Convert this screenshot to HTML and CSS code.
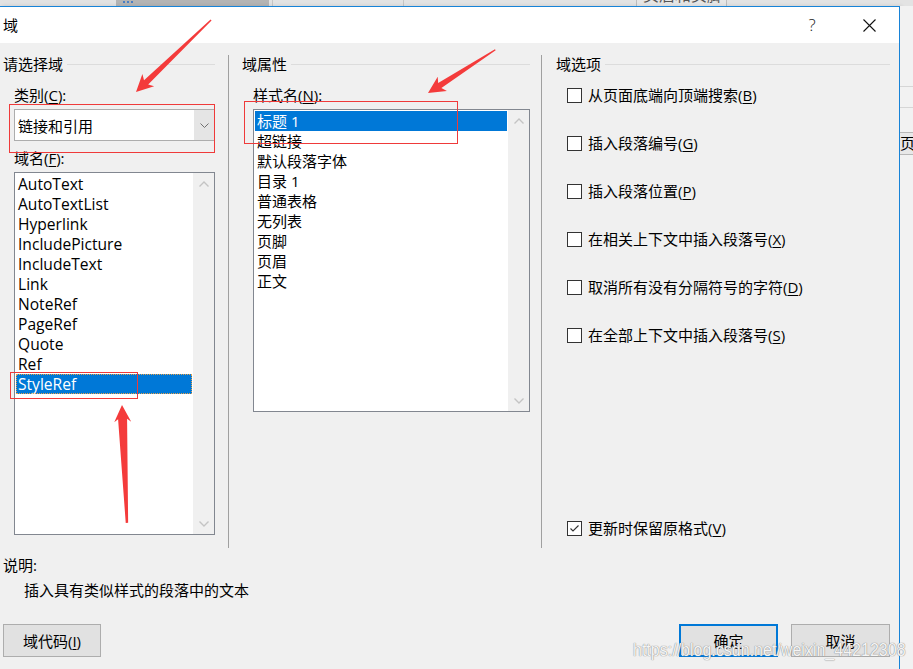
FILE: index.html
```html
<!DOCTYPE html>
<html lang="zh-CN">
<head>
<meta charset="utf-8">
<title>域</title>
<link rel="stylesheet" href="styles.css">
</head>
<body>
<div class="screen">
  <div class="bgtop">
    <div class="seg seg-a"></div>
    <div class="seg seg-dark"><span class="ico"></span></div>
    <div class="seg seg-b"></div>
    <div class="seg seg-c"></div>
    <div class="seg seg-d"></div>
    <div class="seg seg-box"><span>页眉和页脚</span></div>
    <div class="seg seg-e"></div>
  </div>
  <div class="main">
    <div class="dialog">
      <div class="titlebar">
        <div class="title">域</div>
        <div class="tb-btn tb-help">?</div>
        <div class="tb-btn tb-close">
          <svg width="13" height="13" viewBox="0 0 13 13"><path d="M0.5 0.5 L12.5 12.5 M12.5 0.5 L0.5 12.5" stroke="#111" stroke-width="1.1" fill="none"/></svg>
        </div>
      </div>
      <div class="dbody">
        <div class="columns">
          <div class="col col1">
            <div class="ghead"><span>请选择域</span><span class="line"></span></div>
            <div class="inner">
              <div class="lbl">类别(<u>C</u>):</div>
              <div class="combo">
                <div class="val">链接和引用</div>
                <div class="drop"><svg width="9" height="5" viewBox="0 0 9 5"><path d="M0.5 0.5 L4.5 4.5 L8.5 0.5" stroke="#707070" stroke-width="1" fill="none"/></svg></div>
              </div>
              <div class="lbl lbl2">域名(<u>F</u>):</div>
              <div class="listbox list1">
                <div class="items">
                  <div class="item">AutoText</div>
                  <div class="item">AutoTextList</div>
                  <div class="item">Hyperlink</div>
                  <div class="item">IncludePicture</div>
                  <div class="item">IncludeText</div>
                  <div class="item">Link</div>
                  <div class="item">NoteRef</div>
                  <div class="item">PageRef</div>
                  <div class="item">Quote</div>
                  <div class="item">Ref</div>
                  <div class="item sel focus">StyleRef</div>
                </div>
                <div class="sb">
                  <div class="arr"><svg width="10" height="6" viewBox="0 0 10 6"><path d="M0.5 5.5 L5 1 L9.5 5.5" stroke="#c4c4c4" stroke-width="1.4" fill="none"/></svg></div>
                  <div class="arr"><svg width="10" height="6" viewBox="0 0 10 6"><path d="M0.5 0.5 L5 5 L9.5 0.5" stroke="#c4c4c4" stroke-width="1.4" fill="none"/></svg></div>
                </div>
              </div>
            </div>
          </div>
          <div class="sep sep1"></div>
          <div class="col col2">
            <div class="ghead"><span>域属性</span><span class="line"></span></div>
            <div class="inner">
              <div class="lbl">样式名(<u>N</u>):</div>
              <div class="listbox list2">
                <div class="items">
                  <div class="item sel">标题 1</div>
                  <div class="item">超链接</div>
                  <div class="item">默认段落字体</div>
                  <div class="item">目录 1</div>
                  <div class="item">普通表格</div>
                  <div class="item">无列表</div>
                  <div class="item">页脚</div>
                  <div class="item">页眉</div>
                  <div class="item">正文</div>
                </div>
                <div class="sb">
                  <div class="arr"><svg width="10" height="6" viewBox="0 0 10 6"><path d="M0.5 5.5 L5 1 L9.5 5.5" stroke="#c4c4c4" stroke-width="1.4" fill="none"/></svg></div>
                  <div class="arr"><svg width="10" height="6" viewBox="0 0 10 6"><path d="M0.5 0.5 L5 5 L9.5 0.5" stroke="#c4c4c4" stroke-width="1.4" fill="none"/></svg></div>
                </div>
              </div>
            </div>
          </div>
          <div class="sep sep2"></div>
          <div class="col col3">
            <div class="ghead"><span>域选项</span><span class="line"></span></div>
            <div class="inner">
              <div class="chk first"><span class="box"></span><span>从页面底端向顶端搜索(<u>B</u>)</span></div>
              <div class="chk"><span class="box"></span><span>插入段落编号(<u>G</u>)</span></div>
              <div class="chk"><span class="box"></span><span>插入段落位置(<u>P</u>)</span></div>
              <div class="chk"><span class="box"></span><span>在相关上下文中插入段落号(<u>X</u>)</span></div>
              <div class="chk"><span class="box"></span><span>取消所有没有分隔符号的字符(<u>D</u>)</span></div>
              <div class="chk"><span class="box"></span><span>在全部上下文中插入段落号(<u>S</u>)</span></div>
              <div class="chk last"><span class="box"><svg width="13" height="13" viewBox="0 0 13 13"><path d="M2.5 6.5 L5 9 L10.5 3.5" stroke="#333" stroke-width="1.1" fill="none"/></svg></span><span>更新时保留原格式(<u>V</u>)</span></div>
            </div>
          </div>
        </div>
        <div class="desc-lbl">说明:</div>
        <div class="desc">插入具有类似样式的段落中的文本</div>
        <div class="btnrow">
          <div class="btn">域代码(<u>I</u>)</div>
          <div class="btn btn-ok">确定</div>
          <div class="btn btn-cancel">取消</div>
        </div>
      </div>
    </div>
    <div class="bgright">
      <div class="r1"></div>
      <div class="r2"></div>
      <div class="r3"><span>页</span></div>
      <div class="r4"></div>
    </div>
  </div>

  <svg class="annot" width="913" height="669" viewBox="0 0 913 669">
    <g fill="none" stroke="#ef3a3a" stroke-width="1">
      <rect x="9.5" y="104.5" width="205" height="48"/>
      <rect x="244.5" y="101.5" width="213" height="42"/>
      <rect x="10.5" y="372.5" width="127" height="26"/>
    </g>
    <g fill="#f43b3b">
      <polygon transform="translate(136 92) rotate(136.2)" points="-104,-0.7 -14,-3 -17,-8.5 0,0 -17,8.5 -14,3 -104,0.7"/>
      <polygon transform="translate(428 93) rotate(147.3)" points="-80,-0.7 -14,-3 -17,-8.5 0,0 -17,8.5 -14,3 -80,0.7"/>
      <polygon transform="translate(122 405) rotate(-92.4)" points="-118,-1.2 -14,-4.5 -17,-8.5 0,0 -17,8.5 -14,4.5 -118,1.2"/>
    </g>
  </svg>
  <div class="watermark">https://blog.csdn.net/weixin_44212308</div>
</div>
</body>
</html>
```
FILE: styles.css
```css
* { box-sizing: border-box; }
body {
  margin: 0;
  font-family: "Open Sans", "Noto Sans CJK SC", sans-serif;
  font-size: 15px;
  line-height: 20px;
  color: #000;
}
u { text-underline-offset: 2px; text-decoration-thickness: 1px; }
.screen {
  position: relative;
  width: 913px;
  height: 669px;
  overflow: hidden;
  background: #ececec;
}

/* background application strip */
.bgtop { display: flex; height: 6px; background: #e3e3e3; }
.seg { height: 6px; }
.seg-a { width: 116px; background: #e2e2e2; }
.seg-dark { width: 153px; background: #b4b4b4; display: flex; padding-left: 7px; }
.seg-dark .ico { width: 10px; height: 2px; margin-top: 1px; border-top: 2px dotted #4a7fc4; }
.seg-b { width: 4px; background: #e2e2e2; border-right: 1px solid #c6c6c6; }
.seg-c { width: 131px; background: #e3e3e3; border-right: 1px solid #c6c6c6; }
.seg-d { width: 232px; background: #e3e3e3; }
.seg-box { width: 91px; background: #e6e6e6; border-left: 1px solid #bdbdbd; border-right: 1px solid #bdbdbd; overflow: hidden; padding-left: 6px; }
.seg-box span { display: block; margin-top: -15px; font-size: 16px; color: #555; }
.seg-e { flex: 1; background: #e3e3e3; }

.main { display: flex; height: 663px; }

/* dialog */
.dialog {
  width: 900px;
  border-top: 1px solid #1883d7;
  border-right: 1px solid #1883d7;
  background: #f0f0f0;
  display: flex;
  flex-direction: column;
  box-shadow: 2px 0 4px rgba(0, 0, 0, 0.12);
}
.titlebar {
  height: 36px;
  flex: none;
  background: #fff;
  display: flex;
  align-items: center;
  padding-left: 3px;
  padding-right: 7px;
}
.title { flex: 1; }
.tb-btn { width: 46px; height: 36px; display: flex; align-items: center; justify-content: center; }
.tb-help { margin-right: 11px; font-size: 17px; font-weight: 300; color: #222; }

.dbody { flex: 1; display: flex; flex-direction: column; padding-left: 3px; padding-right: 9px; }
.columns { display: flex; margin-top: 11px; height: 494px; }
.col1 { width: 212px; }
.col2 { width: 288px; margin-left: 13px; }
.col3 { width: 334px; margin-left: 14px; }
.sep { width: 1px; background: #a0a0a0; margin-top: 1px; }
.sep1 { margin-left: 13px; }
.sep2 { margin-left: 11px; }

.ghead { display: flex; align-items: center; height: 20px; }
.ghead .line { flex: 1; height: 1px; background: #dcdcdc; margin-left: 4px; }
.inner { padding-left: 11px; }

.lbl { margin-top: 11px; height: 20px; }
.lbl2 { margin-top: 7px; }

.combo {
  margin-top: 4px;
  width: 201px;
  height: 32px;
  border: 1px solid #adadad;
  background: #fff;
  display: flex;
}
.combo .val { flex: 1; padding-left: 3px; display: flex; align-items: center; padding-top: 1px; }
.combo .drop { width: 20px; background: #e5e5e5; display: flex; align-items: center; justify-content: center; }

.listbox { border: 1px solid #828790; background: #fff; display: flex; margin-top: 4px; }
.list1 { width: 201px; height: 363px; }
.list2 { width: 277px; height: 303px; }
.items { flex: 1; padding: 1px; overflow: hidden; }
.item { height: 20px; padding-left: 2px; white-space: nowrap; }
.list1 .item { font-size: 15.6px; }
.item.sel { background: #0078d7; color: #fff; }
.item.focus { outline: 1px dotted #e9a24a; outline-offset: -1px; }
.sb { width: 21px; background: #f0f0f0; display: flex; flex-direction: column; justify-content: space-between; }
.sb .arr { height: 21px; display: flex; align-items: center; justify-content: center; }

.chk { display: flex; align-items: center; height: 20px; margin-top: 28px; white-space: nowrap; }
.chk.first { margin-top: 11px; }
.chk.last { margin-top: 173px; }
.box {
  width: 15px;
  height: 15px;
  border: 1px solid #333;
  background: #fff;
  margin-right: 6px;
  display: flex;
}

.desc-lbl { margin-top: 7px; height: 20px; }
.desc { margin-top: 5px; padding-left: 21px; height: 20px; }

.btnrow { margin-top: 24px; display: flex; }
.btn {
  width: 98px;
  height: 33px;
  border: 1px solid #adadad;
  background: #e1e1e1;
  display: flex;
  align-items: center;
  justify-content: center;
}
.btn-ok { margin-left: auto; width: 99px; border: 2px solid #0078d7; }
.btn-cancel { margin-left: 13px; width: 99px; }

/* background app on the right */
.bgright { flex: 1; display: flex; flex-direction: column; background: #f2f2f2; overflow: hidden; }
.bgright .r1 { height: 81px; border-bottom: 1px solid #d6d6d6; }
.bgright .r2 { height: 21px; border-bottom: 1px solid #d6d6d6; }
.bgright .r3 { height: 23px; margin-top: 24px; background: #e8e8e8; border-top: 1px solid #b8b8b8; border-bottom: 1px solid #b8b8b8; font-size: 15px; line-height: 21px; white-space: nowrap; }
.bgright .r4 { flex: 1; }

/* overlays */
.annot { position: absolute; left: 0; top: 0; pointer-events: none; }
.watermark {
  position: absolute;
  left: 633px;
  top: 639px;
  font-family: "Liberation Sans", sans-serif;
  font-size: 18px;
  line-height: 22px;
  white-space: nowrap;
  color: rgba(255, 255, 255, 0.92);
  text-shadow: 0 0 1px #8c8c8c, 0 0 1px #8c8c8c;
  transform: scaleX(0.89);
  transform-origin: left top;
}
```
